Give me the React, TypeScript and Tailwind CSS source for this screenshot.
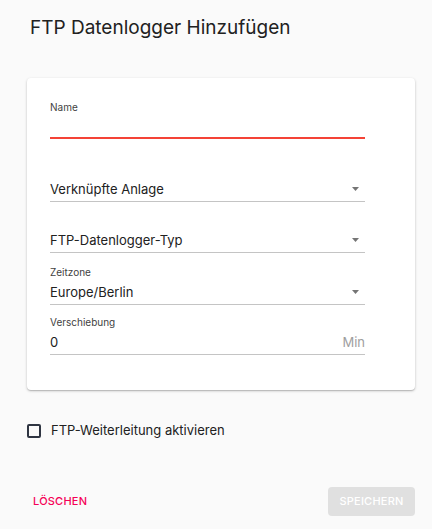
import React from "react";

const Arrow = () => (
  <svg width="7" height="4" viewBox="0 0 7 4" className="mr-[6px] mb-[5px] self-end">
    <path d="M0 0 L7 0 L3.5 4 Z" fill="#757575" />
  </svg>
);

function Field({
  label,
  value,
  placeholder,
  suffix,
  select,
}: {
  label?: string;
  value?: string;
  placeholder?: string;
  suffix?: string;
  select?: boolean;
}) {
  return (
    <div className="flex flex-col w-[315px]">
      <div className="h-[14px] text-[10px] leading-[14px] text-[#424242]">{label ?? ""}</div>
      <div className="h-[26px] flex items-end justify-between border-b border-[#c4c4c4] pb-[5px]">
        <span className="text-[13px] leading-[14px] text-[#212121]">{value ?? placeholder}</span>
        {select ? <Arrow /> : null}
        {suffix ? <span className="text-[13px] leading-[14px] text-[#9e9e9e]">{suffix}</span> : null}
      </div>
    </div>
  );
}

export default function App() {
  return (
    <div
      className="w-[432px] h-[529px] bg-[#fafafa] flex flex-col pl-[27px] pr-[17px]"
      style={{ fontFamily: "Inter, 'Noto Sans', sans-serif" }}
    >
      <h1 className="mt-[17px] ml-[3px] text-[19px] leading-[22px] text-[#212121] font-normal">
        FTP Datenlogger Hinzufügen
      </h1>
      <div className="mt-[39px] bg-white rounded-[4px] shadow-[0_1px_3px_rgba(0,0,0,0.2),0_1px_1px_rgba(0,0,0,0.14)] pl-[23px] pt-[22px] pb-[35px] flex flex-col">
        <div className="flex flex-col w-[315px]">
          <div className="h-[14px] text-[10px] leading-[14px] text-[#424242]">Name</div>
          <div className="h-[25px] border-b-2 border-[#f44336]"></div>
        </div>
        <div className="mt-[23px]">
          <Field placeholder="Verknüpfte Anlage" select />
        </div>
        <div className="mt-[11px]">
          <Field placeholder="FTP-Datenlogger-Typ" select />
        </div>
        <div className="mt-[12px]">
          <Field label="Zeitzone" value="Europe/Berlin" select />
        </div>
        <div className="mt-[10px]">
          <Field label="Verschiebung" value="0" suffix="Min" />
        </div>
      </div>
      <label className="mt-[32px] h-[18px] flex items-center gap-[10px]">
        <span className="w-[14px] h-[14px] border-2 border-[#2f3542] rounded-[2px]"></span>
        <span className="text-[13px] text-[#212121]">FTP-Weiterleitung aktivieren</span>
      </label>
      <div className="mt-[47px] flex items-center justify-between">
        <button className="ml-[6px] text-[11px] font-medium text-[#f50057] tracking-[0.02em]">LÖSCHEN</button>
        <button className="w-[87px] h-[29px] rounded-[4px] bg-[#e0e0e0] text-white text-[11px] font-medium tracking-[0.02em]">
          SPEICHERN
        </button>
      </div>
    </div>
  );
}
